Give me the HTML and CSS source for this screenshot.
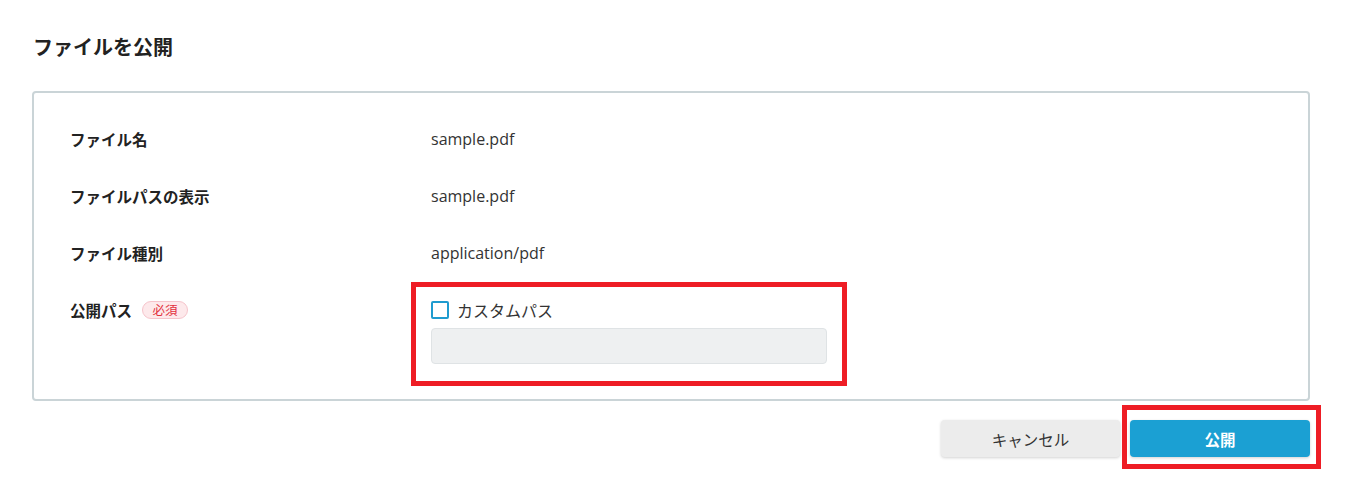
FILE: index.html
```html
<!DOCTYPE html>
<html lang="ja">
<head>
<meta charset="utf-8">
<title>ファイルを公開</title>
<link rel="stylesheet" href="styles.css">
</head>
<body>
<main class="page">
  <h1 class="title">ファイルを公開</h1>
  <section class="card">
    <div class="row">
      <div class="label">ファイル名</div>
      <div class="value">sample.pdf</div>
    </div>
    <div class="row">
      <div class="label">ファイルパスの表示</div>
      <div class="value">sample.pdf</div>
    </div>
    <div class="row">
      <div class="label">ファイル種別</div>
      <div class="value">application/pdf</div>
    </div>
    <div class="row">
      <div class="label">公開パス <span class="badge">必須</span></div>
      <div class="value field">
        <label class="check"><span class="box"></span><span>カスタムパス</span></label>
        <div class="input"></div>
        <div class="mark mark-field"></div>
      </div>
    </div>
  </section>
  <div class="actions">
    <button class="btn btn-cancel">キャンセル</button>
    <div class="primary-wrap">
      <button class="btn btn-primary">公開</button>
      <div class="mark mark-btn"></div>
    </div>
  </div>
</main>
</body>
</html>
```
FILE: styles.css
```css
* { box-sizing: border-box; }
html, body { margin: 0; padding: 0; background: #fff; }
body {
  font-family: "Noto Sans CJK JP", "Noto Sans", sans-serif;
  color: #333;
  font-size: 15px;
}
.page {
  padding: 33px 35px 26px 32px;
}
.title {
  margin: 0 0 30px 1px;
  font-size: 20px;
  line-height: 28px;
  font-weight: 700;
  color: #222;
}
.card {
  border: 2px solid #cad4d7;
  border-radius: 4px;
  padding: 35px 36px 35px 36px;
  display: flex;
  flex-direction: column;
  gap: 35px;
}
.row {
  display: grid;
  grid-template-columns: 361px 1fr;
  align-items: start;
}
.label {
  font-weight: 700;
  font-size: 15.5px;
  line-height: 22px;
  color: #222;
  display: flex;
  align-items: center;
  gap: 10px;
}
.value {
  line-height: 22px;
  font-family: "Open Sans", "Noto Sans CJK JP", sans-serif;
  font-size: 16px;
  color: #333;
}
.badge {
  display: inline-flex;
  align-items: center;
  justify-content: center;
  width: 46px;
  height: 18px;
  border-radius: 9px;
  background: #fde9eb;
  border: 1px solid #f6c4cb;
  color: #e2303d;
  font-size: 12.5px;
  font-weight: 400;
  line-height: 1;
}
.field {
  position: relative;
  display: flex;
  flex-direction: column;
  gap: 7px;
  width: 396px;
}
.check {
  display: flex;
  align-items: center;
  gap: 8px;
  font-family: "Noto Sans CJK JP", sans-serif;
  font-size: 16px;
  line-height: 22px;
  color: #333;
}
.box {
  width: 18px;
  height: 18px;
  border: 2px solid #1f9bcf;
  border-radius: 2px;
  background: #fff;
}
.input {
  height: 36px;
  background: #eef0f1;
  border: 1px solid #dfe3e5;
  border-radius: 4px;
}
.mark {
  position: absolute;
  border: 5px solid #ee1d25;
  pointer-events: none;
}
.mark-field {
  left: -20px;
  right: -20px;
  top: -17px;
  bottom: -22px;
}
.actions {
  display: flex;
  justify-content: flex-end;
  gap: 10px;
  margin-top: 19px;
  padding-right: 0;
}
.primary-wrap { position: relative; }
.btn {
  width: 180px;
  height: 37px;
  border: none;
  border-radius: 4px;
  font-family: "Noto Sans CJK JP", sans-serif;
  font-size: 15.5px;
  cursor: pointer;
  box-shadow: 0 1px 3px rgba(0,0,0,0.18);
}
.btn-cancel {
  width: 179px;
  background: #ececec;
  color: #333;
}
.btn-primary {
  background: #1ba0d3;
  color: #fff;
  font-weight: 700;
  display: block;
}
.mark-btn {
  left: -8px;
  right: -11px;
  top: -15px;
  bottom: -12px;
}
```
